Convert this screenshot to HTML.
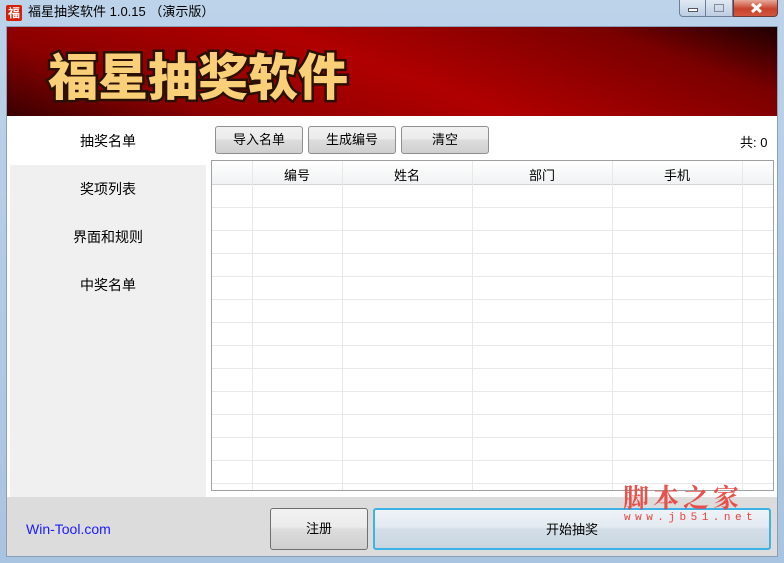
<!DOCTYPE html><html><head><meta charset="utf-8"><style>
*{margin:0;padding:0;box-sizing:border-box}
body{width:784px;height:563px;overflow:hidden;background:linear-gradient(#bcd3ea,#a9c4e0);font-family:"Liberation Sans","Noto Sans CJK SC",sans-serif;font-size:13px;color:#000;position:relative}
.a{position:absolute}
.btn{position:absolute;border:1px solid #8e8f8f;border-radius:3px;background:linear-gradient(#f2f2f2,#ebebeb 45%,#dddddd 50%,#cfcfcf);text-align:center;font-size:13px}
</style></head><body>
<div class="a" style="left:6px;top:5px;width:16px;height:16px;background:#d81e06;border-radius:2px;color:#fff;font-size:12px;line-height:16px;text-align:center;font-weight:bold">福</div>
<div class="a" style="left:28px;top:3px;font-size:13px;line-height:18px">福星抽奖软件 1.0.15 （演示版）</div>
<div class="a" style="left:679px;top:0;width:27px;height:17px;border:1px solid #6d7f98;border-top:none;border-radius:0 0 0 4px;background:linear-gradient(#e0e9f4,#bccde2)"><div class="a" style="left:8px;top:8px;width:10px;height:4px;background:#fff;border:1px solid #556"></div></div>
<div class="a" style="left:706px;top:0;width:27px;height:17px;border:1px solid #6d7f98;border-top:none;border-left:none;background:linear-gradient(#e0e9f4,#bccde2)"><div class="a" style="left:8px;top:4px;width:10px;height:8px;border:1px solid #889"></div></div>
<div class="a" style="left:733px;top:0;width:45px;height:17px;border:1px solid #6d3a3a;border-top:none;border-radius:0 0 4px 0;background:linear-gradient(#e6a99b,#c8432d 55%,#d0593f)"><svg class="a" style="left:16px;top:3px" width="13" height="10"><path d="M2 1L11 9M11 1L2 9" stroke="#fff" stroke-width="3"/></svg></div>
<div class="a" style="left:6px;top:26px;width:772px;height:531px;background:#fff;border:1px solid #8aa0b8"></div>
<div class="a" style="left:7px;top:27px;width:770px;height:89px;background:linear-gradient(200deg,#1e0000 0%,#7a0000 18%,#b00000 50%,#8a0000 80%,#3a0000 100%)"></div>
<div class="a" style="left:48px;top:44px;font-size:50px;font-weight:900;color:#f9cf78;line-height:60px;-webkit-text-stroke:5px #2a1000;paint-order:stroke fill;font-family:'Noto Sans CJK SC',sans-serif">福星抽奖软件</div>
<div class="a" style="left:10px;top:116px;width:196px;height:381px;background:#f0f0f0"></div>
<div class="a" style="left:10px;top:116px;width:196px;height:49px;background:#fff"></div>
<div class="a" style="left:10px;top:131px;width:196px;text-align:center;font-size:14px">抽奖名单</div>
<div class="a" style="left:10px;top:179px;width:196px;text-align:center;font-size:14px">奖项列表</div>
<div class="a" style="left:10px;top:227px;width:196px;text-align:center;font-size:14px">界面和规则</div>
<div class="a" style="left:10px;top:275px;width:196px;text-align:center;font-size:14px">中奖名单</div>
<div class="btn" style="left:215px;top:126px;width:88px;height:28px;line-height:26px">导入名单</div>
<div class="btn" style="left:308px;top:126px;width:88px;height:28px;line-height:26px">生成编号</div>
<div class="btn" style="left:401px;top:126px;width:88px;height:28px;line-height:26px">清空</div>
<div class="a" style="left:740px;top:132px;font-size:13px">共: 0</div>
<div class="a" style="left:211px;top:160px;width:563px;height:331px;border:1px solid #a0a0a0;background:#fff;overflow:hidden">
<div class="a" style="left:0;top:0;width:563px;height:24px;background:linear-gradient(#fff,#f1f2f4);border-bottom:1px solid #d5d5d5"></div>
<svg class="a" style="left:0;top:0" width="563" height="331"><g stroke="#e8e8e8" stroke-width="1">
<line x1="40.5" y1="0" x2="40.5" y2="331"/><line x1="130.5" y1="0" x2="130.5" y2="331"/><line x1="260.5" y1="0" x2="260.5" y2="331"/><line x1="400.5" y1="0" x2="400.5" y2="331"/><line x1="530.5" y1="0" x2="530.5" y2="331"/>
<line x1="0" y1="46.5" x2="563" y2="46.5"/><line x1="0" y1="69.5" x2="563" y2="69.5"/><line x1="0" y1="92.5" x2="563" y2="92.5"/><line x1="0" y1="115.5" x2="563" y2="115.5"/><line x1="0" y1="138.5" x2="563" y2="138.5"/><line x1="0" y1="161.5" x2="563" y2="161.5"/><line x1="0" y1="184.5" x2="563" y2="184.5"/><line x1="0" y1="207.5" x2="563" y2="207.5"/><line x1="0" y1="230.5" x2="563" y2="230.5"/><line x1="0" y1="253.5" x2="563" y2="253.5"/><line x1="0" y1="276.5" x2="563" y2="276.5"/><line x1="0" y1="299.5" x2="563" y2="299.5"/><line x1="0" y1="322.5" x2="563" y2="322.5"/>
</g></svg>
<div class="a" style="left:40px;top:4px;width:90px;text-align:center">编号</div>
<div class="a" style="left:130px;top:4px;width:130px;text-align:center">姓名</div>
<div class="a" style="left:260px;top:4px;width:140px;text-align:center">部门</div>
<div class="a" style="left:400px;top:4px;width:130px;text-align:center">手机</div>
</div>
<div class="a" style="left:7px;top:497px;width:770px;height:59px;background:#dcdcdc"></div>
<div class="a" style="left:26px;top:521px;color:#1a1aff;font-size:14px">Win-Tool.com</div>
<div class="btn" style="left:270px;top:508px;width:98px;height:42px;line-height:40px;border-color:#707070">注册</div>
<div class="btn" style="left:373px;top:508px;width:398px;height:42px;line-height:40px;border:2px solid #3cb2e6;background:linear-gradient(#eef3f7,#e2eaf0 45%,#d3dee7 50%,#c9d6e0)">开始抽奖</div>
<div class="a" style="left:623px;top:478px;color:#e8413a;font-size:26px;letter-spacing:4px;font-family:'Noto Serif CJK SC',serif;font-weight:bold;opacity:.9">脚本之家</div>
<div class="a" style="left:624px;top:512px;color:#e8413a;font-size:11px;letter-spacing:4.5px;font-family:'Liberation Mono',monospace">www.jb51.net</div>
</body></html>
